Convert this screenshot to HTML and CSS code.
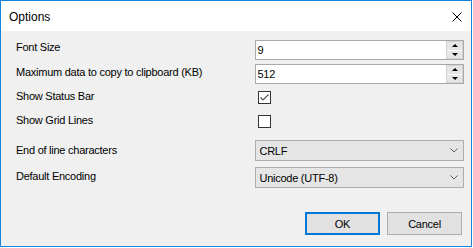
FILE: index.html
```html
<!DOCTYPE html>
<html lang="en">
<head>
  <meta charset="UTF-8">
  <title>Options</title>
  <link rel="stylesheet" href="styles.css">
</head>
<body>
  <div class="window">
    <div class="titlebar">
      <span class="title">Options</span>
      <svg class="close" width="10" height="10" viewBox="0 0 10 10">
        <path d="M0.5 0.5 L9.5 9.5 M9.5 0.5 L0.5 9.5" stroke="#000" stroke-width="1" fill="none"/>
      </svg>
    </div>

    <div class="content">
      <div class="row row-num">
        <span class="label lbl-1">Font Size</span>
        <div class="spin">
          <span class="spin-value">9</span>
          <div class="spin-buttons">
            <span class="spin-btn"><i class="arrow-up"></i></span>
            <span class="spin-btn"><i class="arrow-down"></i></span>
          </div>
        </div>
      </div>

      <div class="row row-num gap-4">
        <span class="label lbl-2">Maximum data to copy to clipboard (KB)</span>
        <div class="spin">
          <span class="spin-value">512</span>
          <div class="spin-buttons">
            <span class="spin-btn"><i class="arrow-up"></i></span>
            <span class="spin-btn"><i class="arrow-down"></i></span>
          </div>
        </div>
      </div>

      <div class="row row-check gap-4">
        <span class="label lbl-3">Show Status Bar</span>
        <span class="checkbox">
          <svg width="11" height="11" viewBox="0 0 11 11">
            <path d="M1.5 5.5 L4 8 L9.5 2.5" stroke="#555" stroke-width="1.2" fill="none"/>
          </svg>
        </span>
      </div>

      <div class="row row-check">
        <span class="label lbl-3">Show Grid Lines</span>
        <span class="checkbox"></span>
      </div>

      <div class="row row-combo gap-4">
        <span class="label lbl-5">End of line characters</span>
        <div class="combo">
          <span>CRLF</span>
          <svg class="chevron" width="8" height="5" viewBox="0 0 8 5">
            <path d="M0.5 0.5 L4 4 L7.5 0.5" stroke="#606060" stroke-width="1" fill="none"/>
          </svg>
        </div>
      </div>

      <div class="row row-combo gap-6">
        <span class="label lbl-6">Default Encoding</span>
        <div class="combo">
          <span>Unicode (UTF-8)</span>
          <svg class="chevron" width="8" height="5" viewBox="0 0 8 5">
            <path d="M0.5 0.5 L4 4 L7.5 0.5" stroke="#606060" stroke-width="1" fill="none"/>
          </svg>
        </div>
      </div>

      <div class="buttons">
        <button class="btn btn-default">OK</button>
        <button class="btn">Cancel</button>
      </div>
    </div>
  </div>
</body>
</html>
```

FILE: styles.css
```css
:root {
  --accent: #1883d7;
  --face: #f0f0f0;
  --control: #e1e1e1;
  --edge: #adadad;
  --sm: 11px;
}
body {
  margin: 0;
  background: #ffffff;
  font-family: 'Liberation Sans', Arial, sans-serif;
  color: #000000;
}
.window {
  width: 472px;
  height: 247px;
  box-sizing: border-box;
  border: 1px solid var(--accent);
  display: flex;
  flex-direction: column;
}
.titlebar {
  height: 30px;
  background: #ffffff;
  display: flex;
  align-items: center;
  justify-content: space-between;
  padding: 0 9px 0 8px;
}
.title {
  font-size: 12px;
  line-height: 14px;
  padding-top: 1px;
}
.close {
  display: block;
  margin-top: 1px;
}
.content {
  flex: 1;
  background: var(--face);
  padding: 9px 7px 0 15px;
  display: flex;
  flex-direction: column;
  letter-spacing: -0.25px;
}
.row {
  display: flex;
  align-items: flex-start;
}
.row-num { height: 20px; }
.row-check { height: 24px; }
.row-combo { height: 21px; }
.gap-4 { margin-top: 4px; }
.gap-6 { margin-top: 6px; }
.label {
  width: 240px;
  font-size: var(--sm);
  line-height: 13px;
}
.lbl-1 { margin-top: 1px; }
.lbl-2 { margin-top: 2px; }
.lbl-3 { margin-top: 2px; }
.lbl-5 { margin-top: 4px; }
.lbl-6 { margin-top: 3px; }

.spin {
  width: 209px;
  height: 20px;
  box-sizing: border-box;
  border: 1px solid #a9a9a9;
  background: #ffffff;
  display: flex;
  align-items: center;
  justify-content: space-between;
}
.spin-value {
  font-size: var(--sm);
  padding-left: 1px;
}
.spin-buttons {
  width: 15px;
  height: 16px;
  margin-right: 1px;
  display: flex;
  flex-direction: column;
  gap: 1px;
  background: #ffffff;
  outline: 1px solid #d4d4d4;
}
.spin-btn {
  flex: 1;
  background: #e6e6e6;
  display: flex;
  align-items: center;
  justify-content: center;
}
.arrow-up,
.arrow-down {
  width: 0;
  height: 0;
  border-left: 3px solid transparent;
  border-right: 3px solid transparent;
}
.arrow-up { border-bottom: 3px solid #000000; }
.arrow-down { border-top: 3px solid #000000; }

.checkbox {
  width: 13px;
  height: 13px;
  box-sizing: border-box;
  border: 1px solid #333333;
  background: #ffffff;
  margin: 3px 0 0 2px;
  display: flex;
  align-items: center;
  justify-content: center;
}
.checkbox svg { display: block; }

.combo {
  width: 209px;
  height: 21px;
  box-sizing: border-box;
  border: 1px solid var(--edge);
  background: #e5e5e5;
  font-size: var(--sm);
  display: flex;
  align-items: center;
  justify-content: space-between;
  padding: 0 5px 0 3px;
}
.chevron { display: block; }

.buttons {
  display: flex;
  justify-content: flex-end;
  gap: 7px;
  margin: 24px 2px 0 0;
}
.btn {
  width: 75px;
  height: 23px;
  box-sizing: border-box;
  border: 1px solid var(--edge);
  background: var(--control);
  font-family: 'Liberation Sans', Arial, sans-serif;
  font-size: var(--sm);
  letter-spacing: -0.25px;
  color: #000000;
  padding: 0;
}
.btn-default {
  border: 2px solid #0078d7;
}
```
